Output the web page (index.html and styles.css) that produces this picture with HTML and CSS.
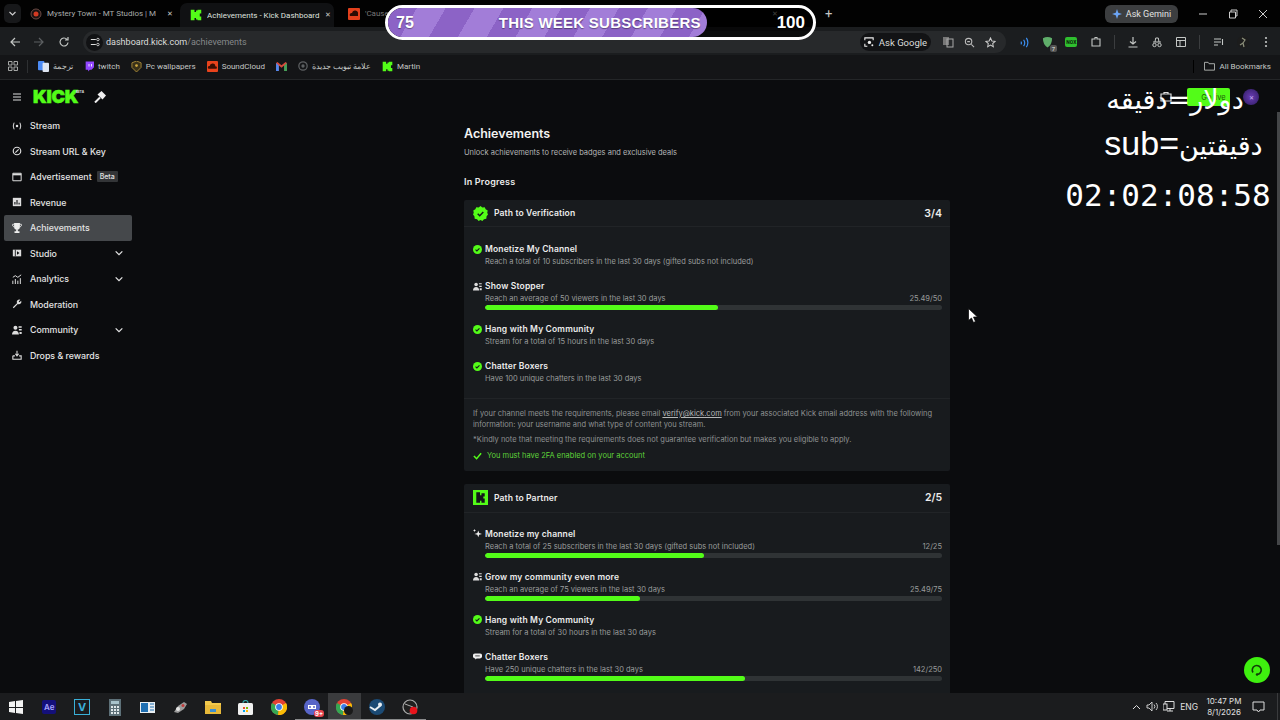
FILE: index.html
```html
<!DOCTYPE html>
<html lang="en">
<head>
    <meta charset="UTF-8">
    <title>Achievements - Kick Dashboard</title>
    <link rel="stylesheet" href="styles.css">
</head>
<body>
    <svg class="defs" width="0" height="0">
        <symbol id="kick" viewBox="0 0 16 16"><path fill="#53fc18" d="M1 1h5v3h2V2h2V1h5v5h-2v2h-2v0h2v2h2v5h-5v-1H8v-2H6v3H1z"/></symbol>
        <symbol id="done" viewBox="0 0 16 16"><circle cx="8" cy="8" r="8" fill="#53fc18"/><path d="M4.500 8.200l2.400 2.400 4.600-4.800" fill="none" stroke="#14171a" stroke-width="1.900"/></symbol>
        <symbol id="people" viewBox="0 0 16 16"><circle cx="5.500" cy="4.500" r="3.200" fill="#ddd"/><path d="M0 15c0-3.500 2.200-6 5.500-6s5.500 2.500 5.500 6z" fill="#ddd"/><path d="M10.500 2h5v2.200h-5zM11 6.500h4.500v2.200H11zM12 11h3.500v3.500H12z" fill="#ddd"/></symbol>
        <symbol id="down" viewBox="0 0 12 12"><path d="M2 4l4 4 4-4" fill="none" stroke="#e4e4e4" stroke-width="1.500"/></symbol>
        <symbol id="chrome" viewBox="0 0 16 16"><circle cx="8" cy="8" r="8" fill="#e34234"/><path d="M8 8L1 4a8 8 0 0 0 6 12z" fill="#34a853"/><path d="M8 8l7-4a8 8 0 0 1-8 12z" fill="#f9bc05"/><circle cx="8" cy="8" r="3.800" fill="#fff"/><circle cx="8" cy="8" r="2.900" fill="#3b7de9"/></symbol>
    </svg>

    <div class="tabstrip">
        <span class="tab-menu"><svg width="9" height="9" viewBox="0 0 12 12"><path d="M2 4l4 4 4-4" fill="none" stroke="#ccc" stroke-width="1.600"/></svg></span>
        <div class="tab tab-one">
            <svg width="12" height="12" viewBox="0 0 12 12"><circle cx="6" cy="6" r="5" fill="#1b1212" stroke="#6b4a44"/><circle cx="6" cy="6" r="2.500" fill="#d43a22"/></svg>
            <span class="tab-title">Mystery Town - MT Studios | M</span>
            <span class="tab-x">✕</span>
        </div>
        <div class="tab tab-active">
            <svg width="12" height="12"><use href="#kick"/></svg>
            <span class="tab-title">Achievements - Kick Dashboard</span>
            <span class="tab-x">✕</span>
        </div>
        <div class="tab tab-three">
            <svg width="12" height="12" viewBox="0 0 12 12"><rect width="12" height="12" rx="1" fill="#e2401c"/><path d="M2 8a2 2 0 0 1 2-3 3 3 0 0 1 6 1v2z" fill="#2a0c04"/></svg>
            <span class="tab-title">'Cause I'm Never Coming Back - 5b</span>
            <span class="tab-x">✕</span>
        </div>
        <span class="tab-new">+</span>
        <div class="gemini"><svg width="10" height="10" viewBox="0 0 12 12"><path d="M6 0l1.500 4.500L12 6 7.500 7.500 6 12 4.500 7.500 0 6l4.500-1.500z" fill="#6ba4f5"/></svg>Ask Gemini</div>
        <div class="win-btns">
            <svg width="10" height="10" viewBox="0 0 10 10"><path d="M1 5h8" stroke="#ccc"/></svg>
            <svg width="10" height="10" viewBox="0 0 10 10"><path d="M1.500 3h6v6h-6zM3 3V1h6v6H7.500" fill="none" stroke="#ccc"/></svg>
            <svg width="10" height="10" viewBox="0 0 10 10"><path d="M1 1l8 8M9 1l-8 8" stroke="#ccc"/></svg>
        </div>
    </div>

    <div class="toolbar">
        <svg class="nav-ic" width="12" height="12" viewBox="0 0 12 12"><path d="M11 6H2M6 2L2 6l4 4" fill="none" stroke="#c4c7c5" stroke-width="1.200"/></svg>
        <svg class="nav-ic dim" width="12" height="12" viewBox="0 0 12 12"><path d="M1 6h9M6 2l4 4-4 4" fill="none" stroke="#5d6062" stroke-width="1.200"/></svg>
        <svg class="nav-ic" width="12" height="12" viewBox="0 0 12 12"><path d="M10 6.500A4 4 0 1 1 9 3.300M10 1v3H7" fill="none" stroke="#c4c7c5" stroke-width="1.200"/></svg>
        <div class="omnibox">
            <span class="site-ic"><svg width="10" height="10" viewBox="0 0 12 12"><path d="M1 3h6M1 9h6" stroke="#ddd" stroke-width="1.300"/><circle cx="9.500" cy="3" r="1.500" fill="none" stroke="#ddd"/><circle cx="9.500" cy="9" r="1.500" fill="none" stroke="#ddd"/></svg></span>
            <span class="url">dashboard.kick.com<span class="url-path">/achievements</span></span>
            <span class="ask-google"><svg width="10" height="10" viewBox="0 0 12 12"><path d="M1 4V1h10v3M1 8v3h3" fill="none" stroke="#eee" stroke-width="1.300"/><circle cx="6.500" cy="6.500" r="2" fill="#eee"/><circle cx="10" cy="10" r="1.200" fill="#eee"/></svg>Ask Google</span>
            <svg class="omni-ic" width="12" height="12" viewBox="0 0 12 12"><rect x="1" y="1" width="6" height="8" fill="#777"/><rect x="5" y="3" width="6" height="8" fill="none" stroke="#aaa"/></svg>
            <svg class="omni-ic" width="11" height="11" viewBox="0 0 12 12"><circle cx="5" cy="5" r="3.500" fill="none" stroke="#bbb" stroke-width="1.200"/><path d="M8 8l3 3M3.500 5h3" stroke="#bbb" stroke-width="1.200"/></svg>
            <svg class="omni-ic" width="11" height="11" viewBox="0 0 12 12"><path d="M6 1l1.500 3.300 3.500.4-2.600 2.400.7 3.500L6 8.900l-3.100 1.700.7-3.500L1 4.700l3.500-.4z" fill="none" stroke="#ccc" stroke-width="1.100"/></svg>
        </div>
        <div class="ext-icons">
            <svg width="11" height="11" viewBox="0 0 12 12"><path d="M2 5a2 2 0 0 1 0 3M5 3a6 6 0 0 1 0 7M8 1a9 9 0 0 1 0 10" fill="none" stroke="#3b8ef0" stroke-width="1.300"/></svg>
            <span class="ext-shield"><svg width="11" height="12" viewBox="0 0 12 12"><path d="M1 2q5-3 10 0 0 7-5 10Q1 9 1 2z" fill="#5fae6a"/></svg><span class="ext-count">7</span></span>
            <span class="ext-nox">NOX</span>
            <svg width="12" height="12" viewBox="0 0 12 12"><path d="M2 3h3V1.500h2V3h3v7H2z" fill="none" stroke="#c4c7c5" stroke-width="1.100"/></svg>
            <span class="tool-sep"></span>
            <svg width="12" height="12" viewBox="0 0 12 12"><path d="M6 1v7M3 5.500L6 8l3-2.500M1.500 11h9" fill="none" stroke="#c4c7c5" stroke-width="1.200"/></svg>
            <svg width="12" height="12" viewBox="0 0 12 12"><path d="M2 6h8M4 6l.7-4h2.600L8 6" fill="none" stroke="#c4c7c5"/><circle cx="3.500" cy="9" r="1.700" fill="none" stroke="#c4c7c5"/><circle cx="8.500" cy="9" r="1.700" fill="none" stroke="#c4c7c5"/></svg>
            <svg width="12" height="12" viewBox="0 0 12 12"><path d="M1.500 1.500h9v9h-9zM1.500 4.500h9M5 4.500v6" fill="none" stroke="#c4c7c5"/></svg>
            <span class="tool-sep"></span>
            <svg width="12" height="12" viewBox="0 0 12 12"><path d="M1 3h7M1 6h7M1 9h4M9.500 3v6" fill="none" stroke="#c4c7c5" stroke-width="1.100"/></svg>
            <svg width="12" height="12" viewBox="0 0 12 12"><circle cx="6" cy="6" r="6" fill="#1c1c1c"/><path d="M5 2l3 2-2 3 1 4M6 7L3 9" fill="none" stroke="#8b8f7a" stroke-width="1.200"/></svg>
            <svg width="10" height="12" viewBox="0 0 10 12"><circle cx="5" cy="2" r="1.100" fill="#c4c7c5"/><circle cx="5" cy="6" r="1.100" fill="#c4c7c5"/><circle cx="5" cy="10" r="1.100" fill="#c4c7c5"/></svg>
        </div>
    </div>

    <div class="bookmarks">
        <svg class="bm-apps" width="10" height="10" viewBox="0 0 10 10"><path d="M.5.500h3.500v3.500H.5zM6 .5h3.500v3.500H6zM.5 6h3.500v3.500H.5zM6 6h3.500v3.500H6z" fill="none" stroke="#b4b7b5" stroke-width=".9"/></svg>
        <span class="bm-sep"></span>
        <a class="bm"><svg width="11" height="11" viewBox="0 0 12 12"><rect width="7" height="10" rx="1" fill="#4c8bf5"/><rect x="5" y="2" width="7" height="10" rx="1" fill="#dfe6f2"/></svg><span dir="rtl">ترجمة</span></a>
        <a class="bm"><svg width="10" height="11" viewBox="0 0 12 12"><path d="M2 0h10v7l-3 3H7l-2 2v-2H2z" fill="#9146ff"/><path d="M6 3v3M9 3v3" stroke="#fff"/></svg>twitch</a>
        <a class="bm"><svg width="11" height="11" viewBox="0 0 12 12"><path d="M6 0l5 2v5l-5 5-5-5V2z" fill="#3a3119" stroke="#a88a3a"/><circle cx="6" cy="5" r="1.500" fill="#d0a93f"/></svg>Pc wallpapers</a>
        <a class="bm"><svg width="11" height="11" viewBox="0 0 12 12"><rect width="12" height="12" rx="1" fill="#e8431c"/><path d="M2 8.500a1.500 1.500 0 0 1 1-3 3 3 0 0 1 6 .5 1.300 1.300 0 0 1 1 2.500z" fill="#3a0e02"/></svg>SoundCloud</a>
        <a class="bm"><svg width="11" height="9" viewBox="0 0 12 10"><path d="M0 1v9h3V4l3 2.500L9 4v6h3V1L10.500 0 6 3.500 1.500 0z" fill="#d64a3c"/><path d="M0 1v9h3V4z" fill="#4c8bf5"/><path d="M12 1v9H9V4z" fill="#3ba55c"/></svg></a>
        <a class="bm"><svg width="10" height="10" viewBox="0 0 12 12"><circle cx="6" cy="6" r="5" fill="none" stroke="#5d6062" stroke-width="1.500"/><circle cx="6" cy="6" r="2" fill="#5d6062"/></svg><span dir="rtl">علامة تبويب جديدة</span></a>
        <a class="bm"><svg width="11" height="11"><use href="#kick"/></svg>Martin</a>
        <span class="bm-sep bm-sep-end"></span>
        <a class="bm bm-all"><svg width="11" height="10" viewBox="0 0 12 10"><path d="M.5 1h4l1 1.500h6v7H.5z" fill="none" stroke="#b4b7b5"/></svg>All Bookmarks</a>
    </div>

    <div class="page">
        <aside class="sidebar">
            <div class="side-top">
                <svg width="10" height="8" viewBox="0 0 10 8"><path d="M1 1h8M1 4h8M1 7h8" stroke="#ddd" stroke-width="1.200"/></svg>
                <span class="logo">KICK<span class="logo-beta">BETA</span></span>
                <svg width="12" height="12" viewBox="0 0 12 12"><path d="M1 11.500L6 6.500" stroke="#eee" stroke-width="2"/><path d="M3.500 3.500L7.500 0l4.500 4.500L8.500 8.500z" fill="#eee"/></svg>
            </div>
            <ul class="side-nav">
                <li class="side-item"><svg width="10" height="10" viewBox="0 0 12 12"><circle cx="6" cy="6" r="1.500" fill="#ddd"/><path d="M2.500 2Q.5 6 2.500 10M9.500 2q2 4 0 8" fill="none" stroke="#ddd" stroke-width="1.200"/></svg>Stream</li>
                <li class="side-item"><svg width="10" height="10" viewBox="0 0 12 12"><circle cx="6" cy="6" r="4.500" fill="none" stroke="#ddd" stroke-width="1.400"/><path d="M4 8l4-4" stroke="#ddd" stroke-width="1.400"/></svg>Stream URL &amp; Key</li>
                <li class="side-item"><svg width="10" height="10" viewBox="0 0 12 12"><path d="M1 1.500h10v9H1z" fill="none" stroke="#ddd" stroke-width="1.200"/><path d="M1 2h10v2H1z" fill="#ddd"/></svg>Advertisement<span class="beta">Beta</span></li>
                <li class="side-item"><svg width="10" height="10" viewBox="0 0 12 12"><path d="M1 1h10v10H1z" fill="#ddd"/><path d="M3.500 9V6M6 9V3.500M8.500 9V7" stroke="#0b0c0e" stroke-width="1.300"/></svg>Revenue</li>
                <li class="side-item side-active"><svg width="10" height="10" viewBox="0 0 12 12"><path d="M2.500 0h7v4.500a3.500 3.500 0 0 1-7 0zM5 8h2v2h2v2H3v-2h2z" fill="#eee"/><path d="M2.500 1.500H.8v2l1.700 1.500M9.500 1.500h1.700v2L9.500 5" fill="none" stroke="#eee"/></svg>Achievements</li>
                <li class="side-item"><svg width="10" height="10" viewBox="0 0 12 12"><path d="M1 2h10v8H1z" fill="#ddd"/><path d="M4 2v8" stroke="#0b0c0e"/><path d="M6 4l3 2-3 2z" fill="#0b0c0e"/></svg>Studio<svg class="chev" width="10" height="10"><use href="#down"/></svg></li>
                <li class="side-item"><svg width="10" height="10" viewBox="0 0 12 12"><path d="M1 12V8M4 12V6M7 12V8M10 12V5M1 4l3-2 3 2 4-3" fill="none" stroke="#ddd" stroke-width="1.200"/></svg>Analytics<svg class="chev" width="10" height="10"><use href="#down"/></svg></li>
                <li class="side-item"><svg width="10" height="10" viewBox="0 0 12 12"><path d="M1 10l5-5a3 3 0 0 1 4-4L8 3l1 1 2-2a3 3 0 0 1-4 4l-5 5z" fill="#ddd"/></svg>Moderation</li>
                <li class="side-item"><svg width="10" height="10"><use href="#people"/></svg>Community<svg class="chev" width="10" height="10"><use href="#down"/></svg></li>
                <li class="side-item"><svg width="10" height="10" viewBox="0 0 12 12"><path d="M1 7v4h10V7H8.500M3.500 7H1" fill="none" stroke="#ddd" stroke-width="1.300"/><path d="M6 1v6M4 4.500L6 7l2-2.500" fill="none" stroke="#ddd" stroke-width="1.300"/></svg>Drops &amp; rewards</li>
            </ul>
        </aside>

        <main class="main">
            <div class="content">
                <h1 class="page-title">Achievements</h1>
                <p class="page-sub">Unlock achievements to receive badges and exclusive deals</p>
                <h2 class="section-title">In Progress</h2>

                <section class="card">
                    <div class="card-head">
                        <svg width="15" height="15" viewBox="0 0 16 16"><path d="M8 0l2 1.500 2.500-.3 1 2.300 2.200 1.200-.5 2.500L16 9l-1.500 2-.3 2.500-2.500.5L10 16l-2-1-2 1-1.700-2-2.500-.5L1.500 11 0 9l.8-1.800L.3 4.700l2.200-1.200 1-2.300L6 1.500z" fill="#53fc18"/><path d="M5 8.200l2.200 2.200L11 6.300" fill="none" stroke="#14171a" stroke-width="1.500"/></svg>
                        <span class="card-name">Path to Verification</span>
                        <span class="card-count">3/4</span>
                    </div>
                    <div class="card-body">
                        <div class="goal">
                            <svg class="goal-ic" width="9" height="9"><use href="#done"/></svg>
                            <div class="goal-name">Monetize My Channel</div>
                            <div class="goal-row"><span>Reach a total of 10 subscribers in the last 30 days (gifted subs not included)</span></div>
                        </div>
                        <div class="goal">
                            <svg class="goal-ic" width="9" height="9"><use href="#people"/></svg>
                            <div class="goal-name">Show Stopper</div>
                            <div class="goal-row"><span>Reach an average of 50 viewers in the last 30 days</span><span>25.49/50</span></div>
                            <div class="bar"><div class="bar-fill" style="width: 51%"></div></div>
                        </div>
                        <div class="goal">
                            <svg class="goal-ic" width="9" height="9"><use href="#done"/></svg>
                            <div class="goal-name">Hang with My Community</div>
                            <div class="goal-row"><span>Stream for a total of 15 hours in the last 30 days</span></div>
                        </div>
                        <div class="goal">
                            <svg class="goal-ic" width="9" height="9"><use href="#done"/></svg>
                            <div class="goal-name">Chatter Boxers</div>
                            <div class="goal-row"><span>Have 100 unique chatters in the last 30 days</span></div>
                        </div>
                    </div>
                    <div class="card-foot">
                        <p class="foot-text">If your channel meets the requirements, please email <a class="foot-link">verify@kick.com</a> from your associated Kick email address with the following information: your username and what type of content you stream.</p>
                        <p class="foot-note">*Kindly note that meeting the requirements does not guarantee verification but makes you eligible to apply.</p>
                        <p class="foot-ok"><svg width="9" height="8" viewBox="0 0 10 8"><path d="M1 4l3 3 5-6" fill="none" stroke="#53fc18" stroke-width="1.700"/></svg>You must have 2FA enabled on your account</p>
                    </div>
                </section>

                <section class="card">
                    <div class="card-head card-head-tall">
                        <svg width="15" height="15" viewBox="0 0 16 16"><rect width="16" height="16" fill="#53fc18"/><path d="M3.500 2.500h4v3h1.500v-2h3.500v3.500H11v2h1.500v4.500H9v-2H7.500v2h-4z" fill="#14171a"/></svg>
                        <span class="card-name">Path to Partner</span>
                        <span class="card-count">2/5</span>
                    </div>
                    <div class="card-body">
                        <div class="goal">
                            <svg class="goal-ic" width="9" height="9" viewBox="0 0 12 12"><path d="M7 2l1.200 3.300L12 6.500 8.200 7.700 7 11 5.800 7.700 2 6.500l3.800-1.200zM2 0l.6 1.400L4 2l-1.400.6L2 4l-.6-1.400L0 2l1.400-.6z" fill="#eee"/></svg>
                            <div class="goal-name">Monetize my channel</div>
                            <div class="goal-row"><span>Reach a total of 25 subscribers in the last 30 days (gifted subs not included)</span><span>12/25</span></div>
                            <div class="bar"><div class="bar-fill" style="width: 48%"></div></div>
                        </div>
                        <div class="goal">
                            <svg class="goal-ic" width="9" height="9"><use href="#people"/></svg>
                            <div class="goal-name">Grow my community even more</div>
                            <div class="goal-row"><span>Reach an average of 75 viewers in the last 30 days</span><span>25.49/75</span></div>
                            <div class="bar"><div class="bar-fill" style="width: 34%"></div></div>
                        </div>
                        <div class="goal">
                            <svg class="goal-ic" width="9" height="9"><use href="#done"/></svg>
                            <div class="goal-name">Hang with My Community</div>
                            <div class="goal-row"><span>Stream for a total of 30 hours in the last 30 days</span></div>
                        </div>
                        <div class="goal">
                            <svg class="goal-ic" width="9" height="9" viewBox="0 0 12 12"><path d="M3 2h6a3 3 0 0 1 0 6.500H5L3 10V8.500a3 3 0 0 1 0-6.500z" fill="#eee"/><path d="M3 5.200h6" stroke="#14171a"/></svg>
                            <div class="goal-name">Chatter Boxers</div>
                            <div class="goal-row"><span>Have 250 unique chatters in the last 30 days</span><span>142/250</span></div>
                            <div class="bar"><div class="bar-fill" style="width: 56.800%"></div></div>
                        </div>
                    </div>
                </section>
            </div>
        </main>

        <div class="page-actions">
            <svg class="act-ic" width="12" height="12" viewBox="0 0 12 12"><path d="M1 3h10v7H1zM4 3V1.500h4V3" fill="none" stroke="#ddd" stroke-width="1.200"/></svg>
            <span class="go-live"><svg width="8" height="8"><use href="#kick"/></svg>Go live</span>
            <span class="avatar">✕</span>
        </div>
        <div class="scroll-thumb"></div>
        <div class="stream-text">
            <div class="stream-line line-one" dir="rtl">دولار=دقيقه</div>
            <div class="stream-line line-two" dir="rtl">دقيقتين<span class="sub-word">=sub</span></div>
            <div class="stream-timer">02:02:08:58</div>
        </div>
        <svg class="cursor" width="10" height="15" viewBox="0 0 10 15"><path d="M.5.500v12l3-2.500 2 4.500 2-1-2-4.500h4z" fill="#fff" stroke="#000" stroke-width=".7"/></svg>
        <span class="help-btn"><svg width="14" height="14" viewBox="0 0 14 14"><path d="M3 9.500A4.500 4.500 0 1 1 7 11.500" fill="none" stroke="#123d0a" stroke-width="1.600"/><circle cx="7" cy="11.500" r="1.200" fill="#123d0a"/></svg></span>
    </div>

    <footer class="taskbar">
        <div class="task-apps">
            <span class="task-app"><svg width="16" height="16" viewBox="0 0 16 16"><path d="M1 3l6-1v6H1zM8 2l7-1v7H8zM1 9h6v5l-6-1zM8 9h7v6l-7-1z" fill="#f2f2f2"/></svg></span>
            <span class="task-app"><span class="app-ae">Ae</span></span>
            <span class="task-app"><span class="app-v">V</span></span>
            <span class="task-app"><svg width="12" height="17" viewBox="0 0 12 17"><rect width="12" height="17" fill="#5d7078"/><rect x="2" y="2" width="8" height="3" fill="#a8c3cc"/><path d="M2 7h2v2H2zM5 7h2v2H5zM8 7h2v2H8zM2 10h2v2H2zM5 10h2v2H5zM8 10h2v2H8zM2 13h2v2H2zM5 13h2v2H5zM8 13h2v2H8z" fill="#dfe7ea"/></svg></span>
            <span class="task-app"><svg width="15" height="11" viewBox="0 0 15 11"><rect width="15" height="11" fill="#e8eef2"/><rect x="1" y="1" width="7" height="9" fill="#1f6fb2"/><path d="M10 2h4M10 5h4M10 8h4" stroke="#1f6fb2"/></svg></span>
            <span class="task-app"><svg width="15" height="13" viewBox="0 0 15 13"><path d="M1 11l4-6 6-4 3 2-3 5-6 4z" fill="#9a9a9a"/><circle cx="5" cy="8" r="2" fill="#e4e4e4"/><circle cx="10" cy="4.500" r="1.500" fill="#c03a3a"/></svg></span>
            <span class="task-app"><svg width="16" height="14" viewBox="0 0 16 14"><path d="M0 1h6l1 2h9v11H0z" fill="#f2c94c"/><rect y="5" width="16" height="9" fill="#e8b93a"/><rect x="5" y="9" width="6" height="3" fill="#3d8fd1"/></svg></span>
            <span class="task-app"><svg width="15" height="15" viewBox="0 0 15 15"><rect y="3" width="15" height="12" rx="1.500" fill="#f0f0f0"/><path d="M5 3a2.500 2.500 0 0 1 5 0" fill="none" stroke="#2fa4a8" stroke-width="1.200"/><path d="M5 7h2v2H5z" fill="#e8502c"/><path d="M8 7h2v2H8z" fill="#7fba00"/><path d="M5 10h2v2H5z" fill="#00a4ef"/><path d="M8 10h2v2H8z" fill="#ffb900"/></svg></span>
            <span class="task-app"><svg width="16" height="16"><use href="#chrome"/></svg></span>
            <span class="task-app task-run"><svg width="16" height="16" viewBox="0 0 16 16"><circle cx="8" cy="8" r="8" fill="#5865c8"/><path d="M4 6h8v4H4z" fill="#fff"/><circle cx="6" cy="8" r="1" fill="#5865c8"/><circle cx="10" cy="8" r="1" fill="#5865c8"/></svg><span class="app-badge">9+</span></span>
            <span class="task-app task-run task-open"><svg width="16" height="16"><use href="#chrome"/></svg><span class="app-sub"></span></span>
            <span class="task-app task-run"><svg width="16" height="16" viewBox="0 0 16 16"><circle cx="8" cy="8" r="8" fill="#1b4a74"/><path d="M1 8l5 3 6-5" fill="none" stroke="#e8eef2" stroke-width="2"/><circle cx="11" cy="5.500" r="2" fill="#e8eef2"/></svg></span>
            <span class="task-app task-run"><svg width="16" height="16" viewBox="0 0 16 16"><circle cx="8" cy="8" r="7" fill="#202020" stroke="#aaa" stroke-width="1.200"/><path d="M3 5l8 3-3 6" fill="none" stroke="#aaa"/><circle cx="11.500" cy="11.500" r="3.800" fill="#e8141c"/></svg></span>
        </div>
        <div class="tray">
            <svg width="9" height="6" viewBox="0 0 9 6"><path d="M1 5l3.500-3.500L8 5" fill="none" stroke="#ddd"/></svg>
            <svg width="12" height="11" viewBox="0 0 12 11"><path d="M1 4h2l3-3v9L3 7H1zM8 3.500a3 3 0 0 1 0 4M10 2a5 5 0 0 1 0 7" fill="none" stroke="#ddd" stroke-width=".9"/></svg>
            <svg width="12" height="11" viewBox="0 0 12 11"><path d="M2 .5h9v7H2zM4 10h6M7 7.500V10" fill="none" stroke="#ddd"/><rect y="3" width="4" height="6" fill="#1b1c1e" stroke="#ddd"/></svg>
            <span class="tray-lang">ENG</span>
            <span class="tray-clock"><span>10:47 PM</span><span>8/1/2026</span></span>
            <svg class="tray-note" width="13" height="12" viewBox="0 0 13 12"><path d="M1 1h11v8H8l-1.500 2L5 9H1z" fill="none" stroke="#ddd"/></svg>
            <span class="tray-edge"></span>
        </div>
    </footer>

    <div class="sub-goal">
        <div class="sub-goal-fill"></div>
        <span class="sub-now">75</span>
        <span class="sub-label">THIS WEEK SUBSCRIBERS</span>
        <span class="sub-max">100</span>
    </div>
</body>
</html>
```

FILE: styles.css
```css
* {
    margin: 0;
    padding: 0;
    box-sizing: border-box;
}

body {
    width: 1280px;
    height: 720px;
    overflow: hidden;
    display: flex;
    flex-direction: column;
    position: relative;
    background: #0b0c0e;
    color: #e8e8e8;
    font-family: Inter, "Noto Sans", sans-serif;
}

svg {
    flex-shrink: 0;
    display: block;
}

.defs {
    position: absolute;
}

/* browser chrome */
.tabstrip {
    height: 27px;
    flex-shrink: 0;
    display: flex;
    align-items: center;
    background: #020202;
    font-family: Roboto, sans-serif;
    font-size: 8px;
    color: #a9acab;
    padding-left: 4px;
}

.tab-menu {
    width: 17px;
    height: 19px;
    display: flex;
    align-items: center;
    justify-content: center;
    background: #17181a;
    border-radius: 5px;
    margin-right: 5px;
}

.tab {
    height: 27px;
    display: flex;
    align-items: center;
    gap: 5px;
    white-space: nowrap;
}

.tab-title {
    flex: 1;
    min-width: 0;
    overflow: hidden;
}

.tab-x {
    font-size: 7px;
    color: #c8c8c8;
}

.tab-one {
    width: 154px;
    padding-left: 4px;
    padding-right: 7px;
}

.tab-active {
    width: 154px;
    margin-top: 3px;
    height: 24px;
    padding: 0 3px 0 10px;
    background: #101113;
    border-radius: 7px 7px 0 0;
    color: #dfe0df;
}

.tab-three {
    width: 484px;
    padding: 0 40px 0 14px;
    color: #777;
}

.tab-new {
    font-size: 13px;
    margin-left: 7px;
    color: #c4c7c5;
}

.gemini {
    margin-left: auto;
    height: 18px;
    width: 73px;
    display: flex;
    align-items: center;
    justify-content: center;
    gap: 4px;
    background: #3c3e40;
    border-radius: 6px;
    color: #e2e2e2;
    font-size: 9px;
}

.win-btns {
    width: 102px;
    padding-left: 20px;
    padding-right: 12px;
    display: flex;
    justify-content: space-between;
}

.toolbar {
    height: 28px;
    flex-shrink: 0;
    display: flex;
    align-items: center;
    background: #1b1d1f;
    padding: 2px 0 0 9px;
    font-family: Roboto, sans-serif;
}

.nav-ic {
    margin-right: 12px;
}

.nav-ic.dim {
    margin-right: 13px;
}

.omnibox {
    width: 923px;
    height: 22px;
    margin-left: 1px;
    display: flex;
    align-items: center;
    background: #27292b;
    border-radius: 11px;
    padding-left: 3px;
    font-size: 9px;
}

.site-ic {
    width: 17px;
    height: 17px;
    border-radius: 50%;
    background: #111214;
    display: flex;
    align-items: center;
    justify-content: center;
    margin-right: 3px;
}

.url {
    flex: 1;
    color: #dcdedc;
}

.url-path {
    color: #85888a;
}

.ask-google {
    height: 18px;
    width: 71px;
    display: flex;
    align-items: center;
    justify-content: center;
    gap: 5px;
    background: #121315;
    border-radius: 9px;
    color: #dcdedc;
    font-size: 9.500px;
    margin-right: 11px;
}

.omni-ic {
    margin-right: 10px;
}

.ext-icons {
    flex: 1;
    display: flex;
    align-items: center;
    justify-content: space-between;
    padding: 0 9px 0 13px;
}

.ext-shield {
    position: relative;
}

.ext-count {
    position: absolute;
    right: -4px;
    bottom: -4px;
    background: #555;
    font-size: 6px;
    padding: 0 2px;
    border-radius: 2px;
}

.ext-nox {
    background: #2fbf2f;
    color: #0c2a0c;
    font-size: 5px;
    font-weight: 800;
    padding: 2px 1px;
    border-radius: 2px;
}

.tool-sep {
    width: 1px;
    height: 14px;
    background: #3b3d3f;
}

.bookmarks {
    height: 25px;
    flex-shrink: 0;
    display: flex;
    align-items: center;
    background: #141517;
    border-bottom: 1px solid #242628;
    font-family: Roboto, sans-serif;
    font-size: 8px;
    color: #c4c7c5;
    padding: 0 0 2px 8px;
}

.bm-sep {
    width: 1px;
    height: 13px;
    background: #2e3032;
    margin: 0 10px 0 9px;
}

.bm-sep-end {
    margin-left: auto;
    margin-right: 10px;
    background: #000;
}

.bm {
    display: flex;
    align-items: center;
    gap: 4px;
    white-space: nowrap;
    margin-right: 11px;
}

.bm-all {
    margin-right: 9px;
}

/* dashboard */
.page {
    flex: 1;
    min-height: 0;
    display: flex;
    position: relative;
}

.sidebar {
    width: 136px;
    flex-shrink: 0;
    padding: 10px 4px 0;
    font-size: 8.800px;
    font-weight: 500;
}

.side-top {
    display: flex;
    align-items: center;
    height: 14px;
    padding-left: 8px;
    margin-bottom: 9px;
}

.logo {
    position: relative;
    width: 61px;
    margin-left: 11px;
    font-size: 18px;
    font-weight: 900;
    line-height: 14px;
    color: #53fc18;
    letter-spacing: -0.2px;
    -webkit-text-stroke: 0.6px #53fc18;
}

.logo-beta {
    position: absolute;
    left: 43px;
    top: 0;
    font-size: 3px;
    line-height: 4px;
    letter-spacing: 0;
    color: #cfcfcf;
    -webkit-text-stroke: 0;
}

.side-nav {
    list-style: none;
    display: flex;
    flex-direction: column;
}

.side-item {
    height: 25.500px;
    display: flex;
    align-items: center;
    gap: 8px;
    padding: 0 8px;
    border-radius: 2px;
    color: #e4e4e4;
}

.side-active {
    background: #45484b;
}

.chev {
    margin-left: auto;
}

.beta {
    margin-left: -3px;
    padding: 1px 3px;
    font-size: 7px;
    background: #333537;
    border-radius: 1px;
}

.main {
    flex: 1;
    min-width: 0;
    overflow: hidden;
}

.content {
    width: 486px;
    margin-left: 328px;
    padding-top: 46px;
}

.page-title {
    font-size: 12.500px;
    font-weight: 600;
    line-height: 16px;
    color: #f2f2f2;
}

.page-sub {
    margin-top: 5px;
    font-size: 7.500px;
    line-height: 12px;
    color: #b4b6b6;
}

.section-title {
    margin-top: 17px;
    font-size: 9px;
    font-weight: 600;
    line-height: 12px;
    color: #ececec;
    letter-spacing: 0.2px;
}

.card {
    background: #181b1e;
    border-radius: 2px;
}

.section-title + .card {
    margin-top: 12px;
}

.card + .card {
    margin-top: 13px;
}

.card-head {
    height: 27px;
    display: flex;
    align-items: center;
    padding: 0 8px 0 9px;
    border-bottom: 1px solid #212427;
}

.card-head-tall {
    height: 29px;
}

.card-head-tall + .card-body {
    padding-top: 15px;
}

.card-name {
    margin-left: 6px;
    font-size: 8.600px;
    font-weight: 600;
    color: #ececec;
    letter-spacing: 0.1px;
}

.card-count {
    margin-left: auto;
    font-size: 10.500px;
    font-weight: 600;
    color: #ececec;
}

.card-body {
    padding: 16px 8px 14px 9px;
    display: flex;
    flex-direction: column;
    gap: 13px;
}

.goal {
    position: relative;
    padding-left: 12px;
}

.goal-ic {
    position: absolute;
    left: 0;
    top: 1.500px;
}

.goal-name {
    font-size: 8.500px;
    font-weight: 600;
    line-height: 12px;
    color: #ececec;
    letter-spacing: 0.15px;
}

.goal-row {
    display: flex;
    justify-content: space-between;
    padding-top: 1px;
    font-size: 7.500px;
    line-height: 11px;
    color: #989b9c;
}

.bar {
    margin-top: 1px;
    height: 5px;
    background: #2f3335;
    border-radius: 3px;
    overflow: hidden;
}

.bar-fill {
    height: 100%;
    background: #53fc18;
    border-radius: 3px;
}

.card-foot {
    border-top: 1px solid #212427;
    padding: 10px 9px 9px;
    font-size: 7.500px;
    line-height: 10.700px;
    color: #8f9293;
}

.foot-link {
    color: #b5b7b8;
    text-decoration: underline;
}

.foot-note {
    margin-top: 5px;
}

.foot-ok {
    margin-top: 5px;
    display: flex;
    align-items: center;
    gap: 5px;
    color: #5fd33a;
}

/* things lying over the page */
.page-actions {
    position: absolute;
    top: 8px;
    right: 21px;
    display: flex;
    align-items: center;
    gap: 13px;
}

.act-ic {
    margin-right: 2px;
}

.go-live {
    width: 43px;
    height: 18px;
    display: flex;
    align-items: center;
    justify-content: center;
    gap: 2px;
    background: #53fc18;
    color: #1d5a08;
    font-size: 7.500px;
    border-radius: 2px;
}

.avatar {
    width: 16px;
    height: 16px;
    border-radius: 50%;
    background: radial-gradient(circle, #6a3cb4 0%, #2e1b60 100%);
    color: #c9b4f0;
    font-size: 6px;
    display: flex;
    align-items: center;
    justify-content: center;
}

.scroll-thumb {
    position: absolute;
    top: 32px;
    right: 0;
    width: 3px;
    height: 433px;
    background: #444648;
}

.stream-text {
    position: absolute;
    top: 3px;
    left: 1060px;
    width: 216px;
    color: #fff;
    text-align: center;
    font-family: "DejaVu Sans", sans-serif;
}

.stream-line {
    font-size: 27px;
    line-height: 34px;
}

.line-one {
    margin-left: 14px;
    margin-bottom: 9px;
}

.line-two {
    margin-left: 31px;
    margin-bottom: 14px;
}

.sub-word {
    font-family: "Liberation Sans", sans-serif;
    font-size: 34px;
}

.stream-timer {
    font-family: "DejaVu Sans Mono", monospace;
    font-size: 31px;
    line-height: 36px;
}

.cursor {
    position: absolute;
    left: 968px;
    top: 228px;
}

.help-btn {
    position: absolute;
    left: 1244px;
    top: 577px;
    width: 26px;
    height: 26px;
    border-radius: 50%;
    background: #3ff00f;
    display: flex;
    align-items: center;
    justify-content: center;
}

/* windows taskbar */
.taskbar {
    height: 27px;
    flex-shrink: 0;
    display: flex;
    align-items: center;
    justify-content: space-between;
    background: #1b1c1e;
    color: #e0e0e0;
}

.task-apps {
    display: flex;
    height: 100%;
}

.task-app {
    width: 32.800px;
    height: 100%;
    padding-top: 1px;
    display: flex;
    align-items: center;
    justify-content: center;
    position: relative;
}

.task-run {
    box-shadow: inset 0 -1px 0 #8a8b8c;
}

.task-open {
    background: #3a3b3d;
}

.app-ae {
    width: 14px;
    height: 14px;
    background: #14107a;
    color: #a9a6ff;
    font-size: 8px;
    font-weight: 600;
    display: flex;
    align-items: center;
    justify-content: center;
    border-radius: 2px;
}

.app-v {
    width: 16px;
    height: 16px;
    border: 1.500px solid #3ab0d8;
    color: #3ab0d8;
    font-size: 11px;
    font-weight: 700;
    display: flex;
    align-items: center;
    justify-content: center;
}

.app-badge {
    position: absolute;
    right: 4px;
    bottom: 3px;
    background: #e8434e;
    color: #fff;
    font-size: 6px;
    font-weight: 700;
    padding: 0 1px;
    border-radius: 3px;
}

.app-sub {
    position: absolute;
    right: 8px;
    bottom: 5px;
    width: 9px;
    height: 9px;
    border-radius: 50%;
    background: #1a1a1a;
}

.tray {
    height: 100%;
    display: flex;
    align-items: center;
    gap: 5px;
    padding-right: 2px;
    font-size: 8.500px;
}

.tray-clock {
    display: flex;
    flex-direction: column;
    align-items: center;
    gap: 2px;
    margin-left: 3px;
    width: 36px;
    font-size: 8px;
    line-height: 9px;
    white-space: nowrap;
}

.tray-note {
    margin-left: 5px;
    margin-right: 7px;
}

.tray-edge {
    width: 1px;
    height: 100%;
    background: #3a3b3d;
}

/* subscriber goal from the stream overlay */
.sub-goal {
    position: absolute;
    left: 385px;
    top: 5px;
    width: 431px;
    height: 35px;
    display: flex;
    align-items: center;
    border: 3px solid #fff;
    border-radius: 18px;
    background: rgba(0, 0, 0, 0.7);
    overflow: hidden;
    color: #fff;
    font-family: "Liberation Sans", sans-serif;
    font-weight: 700;
    text-shadow: 0 1px 1px rgba(0, 0, 0, 0.4);
}

.sub-goal-fill {
    position: absolute;
    left: 0;
    top: 0;
    bottom: 0;
    width: 75%;
    background: repeating-linear-gradient(120deg, #8c63c6 0 25px, #a27dd8 25px 50px);
    border-radius: 0 16px 16px 0;
}

.sub-now,
.sub-label,
.sub-max {
    position: relative;
}

.sub-now {
    margin-left: 8px;
    font-size: 16px;
}

.sub-label {
    margin-left: 85px;
    font-size: 15px;
    letter-spacing: 0.25px;
}

.sub-max {
    margin-left: auto;
    margin-right: 8px;
    font-size: 17px;
}
```
